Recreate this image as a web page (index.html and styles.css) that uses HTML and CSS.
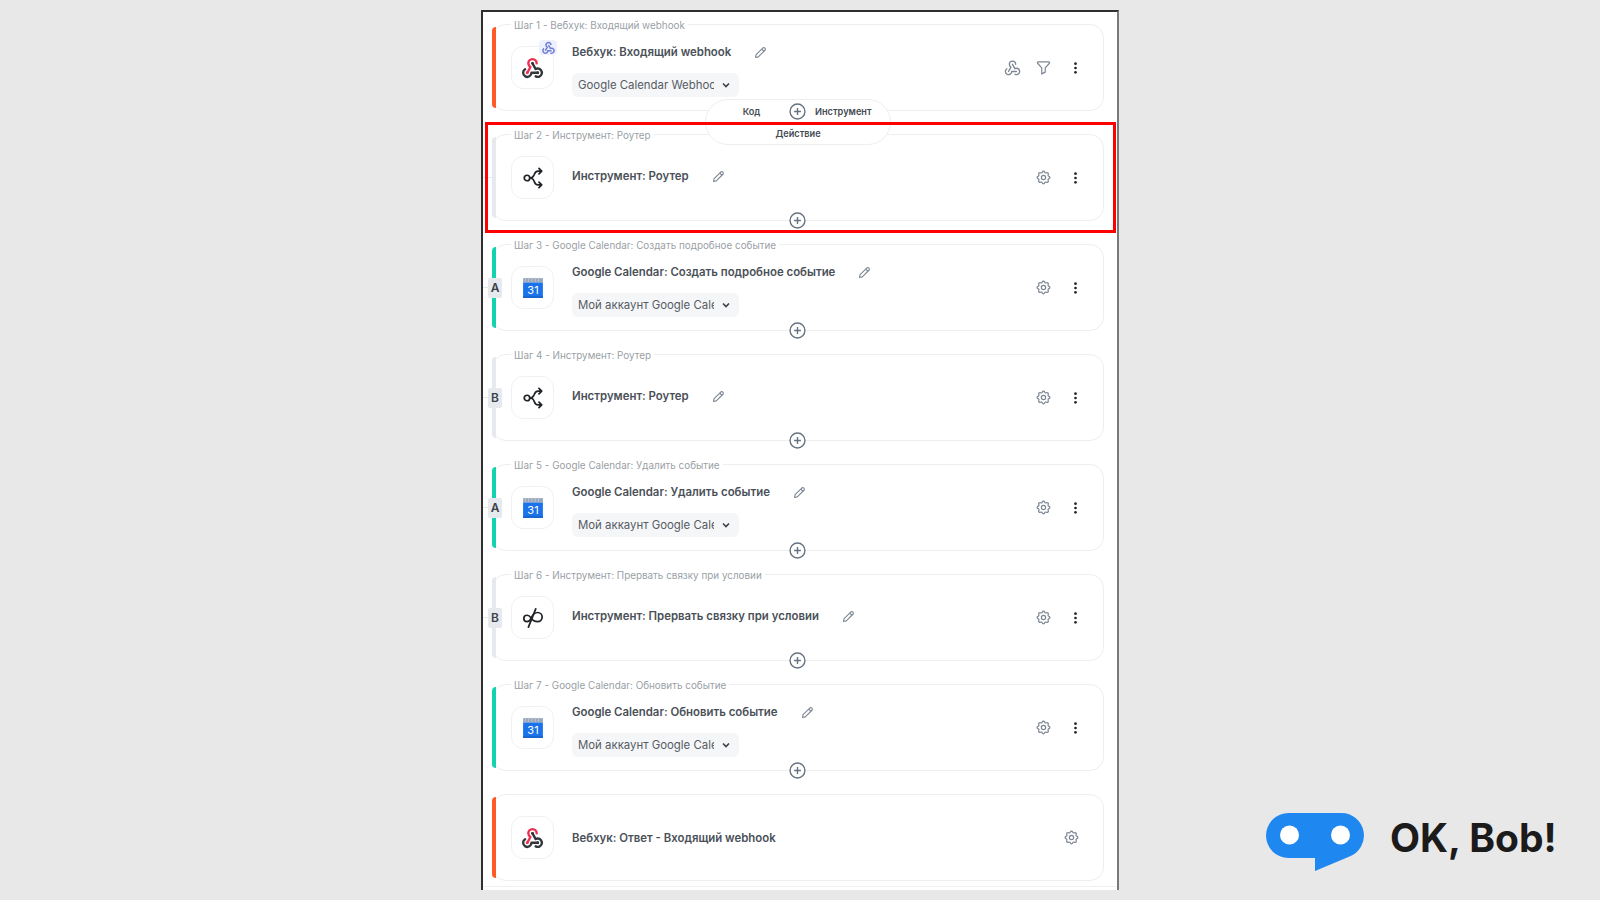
FILE: index.html
```html
<!DOCTYPE html>
<html lang="en">
<head>
    <meta charset="UTF-8">
    <title>Сценарий: шаги</title>
    <link rel="stylesheet" href="styles.css">
</head>
<body>
    <svg class="sprite" width="0" height="0">
        <symbol id="i-webhook" viewBox="0 0 24 24"><path d="M4.876 13.61a4 4 0 1 0 6.124 3.39h6"/><path d="M15.066 20.502a4 4 0 1 0 1.934 -7.502c-.706 0 -1.424 .179 -2 .5l-3 -5.5"/><path d="M16 8a4 4 0 1 0 -8 0c0 1.506 .77 2.818 2 3.5l-3 5.5"/></symbol>
        <symbol id="i-webhook-color" viewBox="0 0 24 24"><path class="dark" d="M4.876 13.61a4 4 0 1 0 6.124 3.39h6"/><path class="dark" d="M15.066 20.502a4 4 0 1 0 1.934 -7.502c-.706 0 -1.424 .179 -2 .5l-3 -5.5"/><path class="red" d="M16 8a4 4 0 1 0 -8 0c0 1.506 .77 2.818 2 3.5l-3 5.5"/><circle class="red-dot" cx="7" cy="17" r="1.4"/><circle class="dark-dot" cx="12" cy="8" r="1.4"/><circle class="dark-dot" cx="17" cy="17" r="1.4"/></symbol>
        <symbol id="i-router" viewBox="0 0 24 24"><circle cx="5.5" cy="12" r="3"/><path d="M8.500 12c3.500 0 4.500 -2.500 5 -4c.6 -2 1.800 -3.500 4 -3.500h3.500M8.500 12c3.500 0 4.500 2.500 5 4c.6 2 1.800 3.500 4 3.500h3.500M18.500 1.500l3 3l-3 3M18.500 16.500l3 3l-3 3"/></symbol>
        <symbol id="i-break" viewBox="0 0 24 24"><path d="M10 12c-1.500 -2 -3 -3 -4.500 -3a3.500 3.500 0 0 0 0 7c2 0 3.500 -1.500 4.500 -4c1.500 -3.500 4 -6 7 -6a5 5 0 0 1 0 10c-3 0 -5.500 -1.500 -7 -4"/><path d="M7 22l8 -20"/></symbol>
        <symbol id="i-pencil" viewBox="0 0 24 24"><path d="M4 20l1 -4.500l11 -11a2.600 2.600 0 0 1 3.500 3.500l-11 11z"/><path d="M14 6.500l3.500 3.500"/></symbol>
        <symbol id="i-gear" viewBox="0 0 24 24"><path d="M10.325 4.317c.426 -1.756 2.924 -1.756 3.35 0a1.724 1.724 0 0 0 2.573 1.066c1.543 -.94 3.31 .826 2.37 2.37a1.724 1.724 0 0 0 1.065 2.572c1.756 .426 1.756 2.924 0 3.35a1.724 1.724 0 0 0 -1.066 2.573c.94 1.543 -.826 3.31 -2.37 2.37a1.724 1.724 0 0 0 -2.572 1.065c-.426 1.756 -2.924 1.756 -3.35 0a1.724 1.724 0 0 0 -2.573 -1.066c-1.543 .94 -3.31 -.826 -2.37 -2.37a1.724 1.724 0 0 0 -1.065 -2.572c-1.756 -.426 -1.756 -2.924 0 -3.35a1.724 1.724 0 0 0 1.066 -2.573c-.94 -1.543 .826 -3.31 2.37 -2.37c1 .608 2.296 .07 2.572 -1.065z"/><circle cx="12" cy="12" r="3"/></symbol>
        <symbol id="i-funnel" viewBox="0 0 24 24"><path d="M4.500 4h15c1 0 1.500 1.200 .8 2l-5.800 6.500v6l-5 2.500v-8.500l-5.800 -6.500c-.7 -.8 -.2 -2 .8 -2z"/></symbol>
        <symbol id="i-dots" viewBox="0 0 4 14"><circle cx="2" cy="2" r="1.600"/><circle cx="2" cy="7" r="1.600"/><circle cx="2" cy="12" r="1.600"/></symbol>
        <symbol id="i-plus" viewBox="0 0 16 16"><circle cx="8" cy="8" r="7"/><path d="M8 4.800v6.400M4.800 8h6.400"/></symbol>
        <symbol id="i-chevron" viewBox="0 0 10 10"><path d="M2 3.500l3 3l3 -3"/></symbol>
        <symbol id="i-calendar" viewBox="0 0 20 20"><rect x="1" y="1" width="18" height="4" fill="#9aa8bb"/><path d="M3 1v3M6 1v3M9 1v3M12 1v3M15 1v3" stroke="#c4ccd8" stroke-width=".7"/><rect x="1" y="5" width="18" height="14" fill="#1a73e8"/><rect x="1" y="17.500" width="18" height="1.500" fill="#1863cc"/><text x="10" y="15.500" text-anchor="middle" font-family="Inter, sans-serif" font-size="10" fill="#fff">31</text></symbol>
    </svg>

    <div class="panel">
        <!-- Step 1 -->
        <div class="card accent-orange">
            <span class="step-label">Шаг 1 - Вебхук: Входящий webhook</span>
            <div class="app-icon">
                <svg class="logo-icon"><use href="#i-webhook-color"/></svg>
                <span class="trigger-badge"><svg><use href="#i-webhook"/></svg></span>
            </div>
            <div class="info">
                <div class="title-row"><span class="title">Вебхук: Входящий webhook</span><svg class="pencil"><use href="#i-pencil"/></svg></div>
                <div class="picker"><span class="picker-text">Google Calendar Webhook</span><svg class="chevron"><use href="#i-chevron"/></svg></div>
            </div>
            <div class="actions">
                <svg class="act wide"><use href="#i-webhook"/></svg>
                <svg class="act"><use href="#i-funnel"/></svg>
                <svg class="act dots"><use href="#i-dots"/></svg>
            </div>
            <div class="add-menu">
                <div class="add-menu-row">
                    <span class="add-code">Код</span>
                    <svg class="plus-inline"><use href="#i-plus"/></svg>
                    <span class="add-tool">Инструмент</span>
                </div>
                <div class="add-action">Действие</div>
            </div>
        </div>

        <!-- Step 2 -->
        <div class="card accent-grey selected">
            <span class="step-label">Шаг 2 - Инструмент: Роутер</span>
            <span class="stub"></span>
            <div class="app-icon"><svg class="logo-icon line"><use href="#i-router"/></svg></div>
            <div class="info single">
                <div class="title-row"><span class="title">Инструмент: Роутер</span><svg class="pencil"><use href="#i-pencil"/></svg></div>
            </div>
            <div class="actions">
                <svg class="act"><use href="#i-gear"/></svg>
                <svg class="act dots"><use href="#i-dots"/></svg>
            </div>
            <svg class="plus"><use href="#i-plus"/></svg>
        </div>

        <!-- Step 3 -->
        <div class="card accent-green">
            <span class="step-label">Шаг 3 - Google Calendar: Создать подробное событие</span>
            <span class="stub"></span>
            <span class="branch">A</span>
            <div class="app-icon"><svg class="logo-icon cal"><use href="#i-calendar"/></svg></div>
            <div class="info">
                <div class="title-row"><span class="title">Google Calendar: Создать подробное событие</span><svg class="pencil"><use href="#i-pencil"/></svg></div>
                <div class="picker"><span class="picker-text">Мой аккаунт Google Calendar</span><svg class="chevron"><use href="#i-chevron"/></svg></div>
            </div>
            <div class="actions">
                <svg class="act"><use href="#i-gear"/></svg>
                <svg class="act dots"><use href="#i-dots"/></svg>
            </div>
            <svg class="plus"><use href="#i-plus"/></svg>
        </div>

        <!-- Step 4 -->
        <div class="card accent-grey">
            <span class="step-label">Шаг 4 - Инструмент: Роутер</span>
            <span class="stub"></span>
            <span class="branch">B</span>
            <div class="app-icon"><svg class="logo-icon line"><use href="#i-router"/></svg></div>
            <div class="info single">
                <div class="title-row"><span class="title">Инструмент: Роутер</span><svg class="pencil"><use href="#i-pencil"/></svg></div>
            </div>
            <div class="actions">
                <svg class="act"><use href="#i-gear"/></svg>
                <svg class="act dots"><use href="#i-dots"/></svg>
            </div>
            <svg class="plus"><use href="#i-plus"/></svg>
        </div>

        <!-- Step 5 -->
        <div class="card accent-green">
            <span class="step-label">Шаг 5 - Google Calendar: Удалить событие</span>
            <span class="stub"></span>
            <span class="branch">A</span>
            <div class="app-icon"><svg class="logo-icon cal"><use href="#i-calendar"/></svg></div>
            <div class="info">
                <div class="title-row"><span class="title">Google Calendar: Удалить событие</span><svg class="pencil"><use href="#i-pencil"/></svg></div>
                <div class="picker"><span class="picker-text">Мой аккаунт Google Calendar</span><svg class="chevron"><use href="#i-chevron"/></svg></div>
            </div>
            <div class="actions">
                <svg class="act"><use href="#i-gear"/></svg>
                <svg class="act dots"><use href="#i-dots"/></svg>
            </div>
            <svg class="plus"><use href="#i-plus"/></svg>
        </div>

        <!-- Step 6 -->
        <div class="card accent-grey">
            <span class="step-label">Шаг 6 - Инструмент: Прервать связку при условии</span>
            <span class="stub"></span>
            <span class="branch">B</span>
            <div class="app-icon"><svg class="logo-icon line"><use href="#i-break"/></svg></div>
            <div class="info single">
                <div class="title-row"><span class="title">Инструмент: Прервать связку при условии</span><svg class="pencil"><use href="#i-pencil"/></svg></div>
            </div>
            <div class="actions">
                <svg class="act"><use href="#i-gear"/></svg>
                <svg class="act dots"><use href="#i-dots"/></svg>
            </div>
            <svg class="plus"><use href="#i-plus"/></svg>
        </div>

        <!-- Step 7 -->
        <div class="card accent-green">
            <span class="step-label">Шаг 7 - Google Calendar: Обновить событие</span>
            <div class="app-icon"><svg class="logo-icon cal"><use href="#i-calendar"/></svg></div>
            <div class="info">
                <div class="title-row"><span class="title">Google Calendar: Обновить событие</span><svg class="pencil"><use href="#i-pencil"/></svg></div>
                <div class="picker"><span class="picker-text">Мой аккаунт Google Calendar</span><svg class="chevron"><use href="#i-chevron"/></svg></div>
            </div>
            <div class="actions">
                <svg class="act"><use href="#i-gear"/></svg>
                <svg class="act dots"><use href="#i-dots"/></svg>
            </div>
            <svg class="plus"><use href="#i-plus"/></svg>
        </div>

        <!-- Response -->
        <div class="card accent-orange last">
            <div class="app-icon"><svg class="logo-icon"><use href="#i-webhook-color"/></svg></div>
            <div class="info">
                <div class="title-row"><span class="title">Вебхук: Ответ - Входящий webhook</span></div>
            </div>
            <div class="actions">
                <svg class="act"><use href="#i-gear"/></svg>
            </div>
        </div>
        <div class="panel-foot"></div>
    </div>

    <div class="brand">
        <svg class="brand-mark" viewBox="0 0 98 58">
            <path fill="#1f87f0" d="M22.500 0h53a22.500 22.500 0 0 1 8 43.500l-34.500 14.500v-13h-26.500a22.500 22.500 0 0 1 0 -45z"/>
            <circle cx="23.500" cy="22" r="9.500" fill="#fff"/>
            <circle cx="74.500" cy="22" r="9.500" fill="#fff"/>
        </svg>
        <span class="brand-name">OK, Bob!</span>
    </div>
</body>
</html>
```

FILE: styles.css
```css
* {
    box-sizing: border-box;
}
html, body {
    height: 900px;
    overflow: hidden;
}
body {
    margin: 0;
    display: flex;
    background-color: #e8e8e8;
    font-family: Inter, "Noto Sans", sans-serif;
}
.sprite {
    position: absolute;
}

/* Screenshot frame */
.panel {
    width: 638px;
    height: 880px;
    margin: 10px 0 0 481px;
    padding: 12px 13px 0 9px;
    background-color: #fff;
    border: solid #2f2f2f;
    border-width: 2px 2px 0 2px;
    border-right-color: #77797c;
}
.panel-foot {
    height: 1px;
    margin: 5px -13px 0 -9px;
    background-color: #eff0f2;
}

/* Step cards */
.card {
    position: relative;
    display: flex;
    align-items: center;
    height: 87px;
    margin-bottom: 23px;
    padding-left: 18px;
    background-color: #fff;
    border: 1.5px solid #eceef0;
    border-radius: 14px;
}
.card.last {
    margin-bottom: 0;
}
.card::before {
    content: "";
    position: absolute;
    left: -1px;
    top: 2px;
    bottom: 2px;
    width: 3.5px;
    border-radius: 6px 0 0 6px;
}
.accent-orange::before {
    background-color: #ff5a26;
}
.accent-green::before {
    background-color: #12d3ad;
}
.accent-grey::before {
    background-color: #e6e9ee;
}
.selected::after {
    content: "";
    position: absolute;
    top: -13px;
    left: -8px;
    right: -13px;
    bottom: -13px;
    border: 3px solid #f00;
    z-index: 3;
}
.step-label {
    position: absolute;
    top: -6px;
    left: 18px;
    padding: 0 3px;
    background-color: #fff;
    font-size: 9.9px;
    line-height: 13px;
    color: #9a9fa6;
}
.stub {
    position: absolute;
    left: -10px;
    top: 42px;
    width: 9px;
    height: 1px;
    background-color: #e6e9ee;
}
.branch {
    position: absolute;
    left: -5px;
    top: 33px;
    width: 14px;
    height: 20px;
    background-color: #e6e9ee;
    border-radius: 2px;
    font-size: 12px;
    font-weight: 600;
    line-height: 20px;
    text-align: center;
    color: #3c4148;
    z-index: 1;
}
.app-icon {
    position: relative;
    flex: none;
    display: flex;
    align-items: center;
    justify-content: center;
    width: 43px;
    height: 43px;
    background-color: #fff;
    border: 1.5px solid #f0f1f3;
    border-radius: 12px;
}
.logo-icon {
    width: 25px;
    height: 25px;
    fill: none;
    stroke-width: 2.3;
    stroke-linecap: round;
    stroke-linejoin: round;
}
.logo-icon.line {
    width: 22px;
    height: 22px;
    stroke: #1f2328;
    stroke-width: 1.9;
}
.logo-icon.cal {
    width: 22px;
    height: 22px;
}
.dark {
    stroke: #33373c;
}
.red {
    stroke: #ee2f4f;
}
.red-dot {
    fill: #ee2f4f;
}
.dark-dot {
    fill: #33373c;
}
.trigger-badge {
    position: absolute;
    top: -7px;
    right: -4px;
    display: flex;
    align-items: center;
    justify-content: center;
    width: 18px;
    height: 15px;
    background-color: #eef0fb;
    border-radius: 4px;
}
.trigger-badge svg {
    width: 15px;
    height: 15px;
    fill: none;
    stroke: #6f7fd6;
    stroke-width: 2.4;
}

/* Title and account picker */
.info {
    display: flex;
    flex-direction: column;
    align-items: flex-start;
    gap: 12px;
    margin-left: 18px;
    margin-top: 5px;
}
.info.single {
    margin-top: -2px;
}
.last .info {
    margin-top: 1px;
}
.title-row {
    display: flex;
    align-items: center;
}
.title {
    font-size: 11.4px;
    font-weight: 600;
    line-height: 17px;
    color: #4a5058;
}
.pencil {
    width: 15px;
    height: 15px;
    margin-left: 22px;
    fill: none;
    stroke: #7d8794;
    stroke-width: 1.8;
    stroke-linejoin: round;
}
.picker {
    display: flex;
    align-items: center;
    width: 167px;
    height: 24px;
    padding: 0 7px 0 6px;
    background-color: #f5f6f8;
    border-radius: 6px;
}
.picker-text {
    width: 136px;
    overflow: hidden;
    white-space: nowrap;
    font-size: 11.4px;
    color: #565c64;
}
.chevron {
    width: 10px;
    height: 10px;
    margin-left: 7px;
    fill: none;
    stroke: #3c4148;
    stroke-width: 1.6;
}

/* Right-hand actions */
.actions {
    display: flex;
    align-items: center;
    margin-left: auto;
    padding-right: 12px;
}
.last .actions {
    padding-right: 16px;
}
.act {
    width: 17px;
    height: 17px;
    margin: 0 7.5px;
    fill: none;
    stroke: #7d8794;
    stroke-width: 1.7;
    stroke-linecap: round;
    stroke-linejoin: round;
}
.act.wide {
    width: 19px;
    height: 19px;
    margin: 0 5px 0 9px;
}
.act.dots {
    height: 12px;
    fill: #23272c;
    stroke: none;
}
.plus, .plus-inline {
    fill: #fff;
    stroke: #66727f;
    stroke-width: 1.3;
    width: 17px;
    height: 17px;
}
.plus {
    position: absolute;
    left: 296px;
    bottom: -9px;
}

/* Add step menu, opened under step 1 */
.add-menu {
    position: absolute;
    top: 74px;
    left: 212px;
    width: 186px;
    height: 46px;
    padding-top: 2px;
    background-color: #fff;
    border: 1.5px solid #eceef0;
    border-radius: 23px;
    z-index: 2;
    font-size: 9.2px;
    font-weight: 600;
    color: #454b53;
}
.add-menu-row {
    display: flex;
    align-items: center;
    height: 18px;
}
.add-code {
    width: 75px;
    margin-left: 8px;
    text-align: center;
}
.plus-inline {
    flex: none;
}
.add-tool {
    margin-left: 9px;
}
.add-action {
    margin-top: 8px;
    text-align: center;
}

/* Brand */
.brand {
    display: flex;
    align-items: center;
    align-self: flex-end;
    margin: 0 0 29px 147px;
}
.brand-mark {
    width: 98px;
    height: 58px;
}
.brand-name {
    margin-left: 26px;
    margin-bottom: 10px;
    font-size: 39px;
    font-weight: 700;
    color: #1b1b1b;
    white-space: nowrap;
}
```
